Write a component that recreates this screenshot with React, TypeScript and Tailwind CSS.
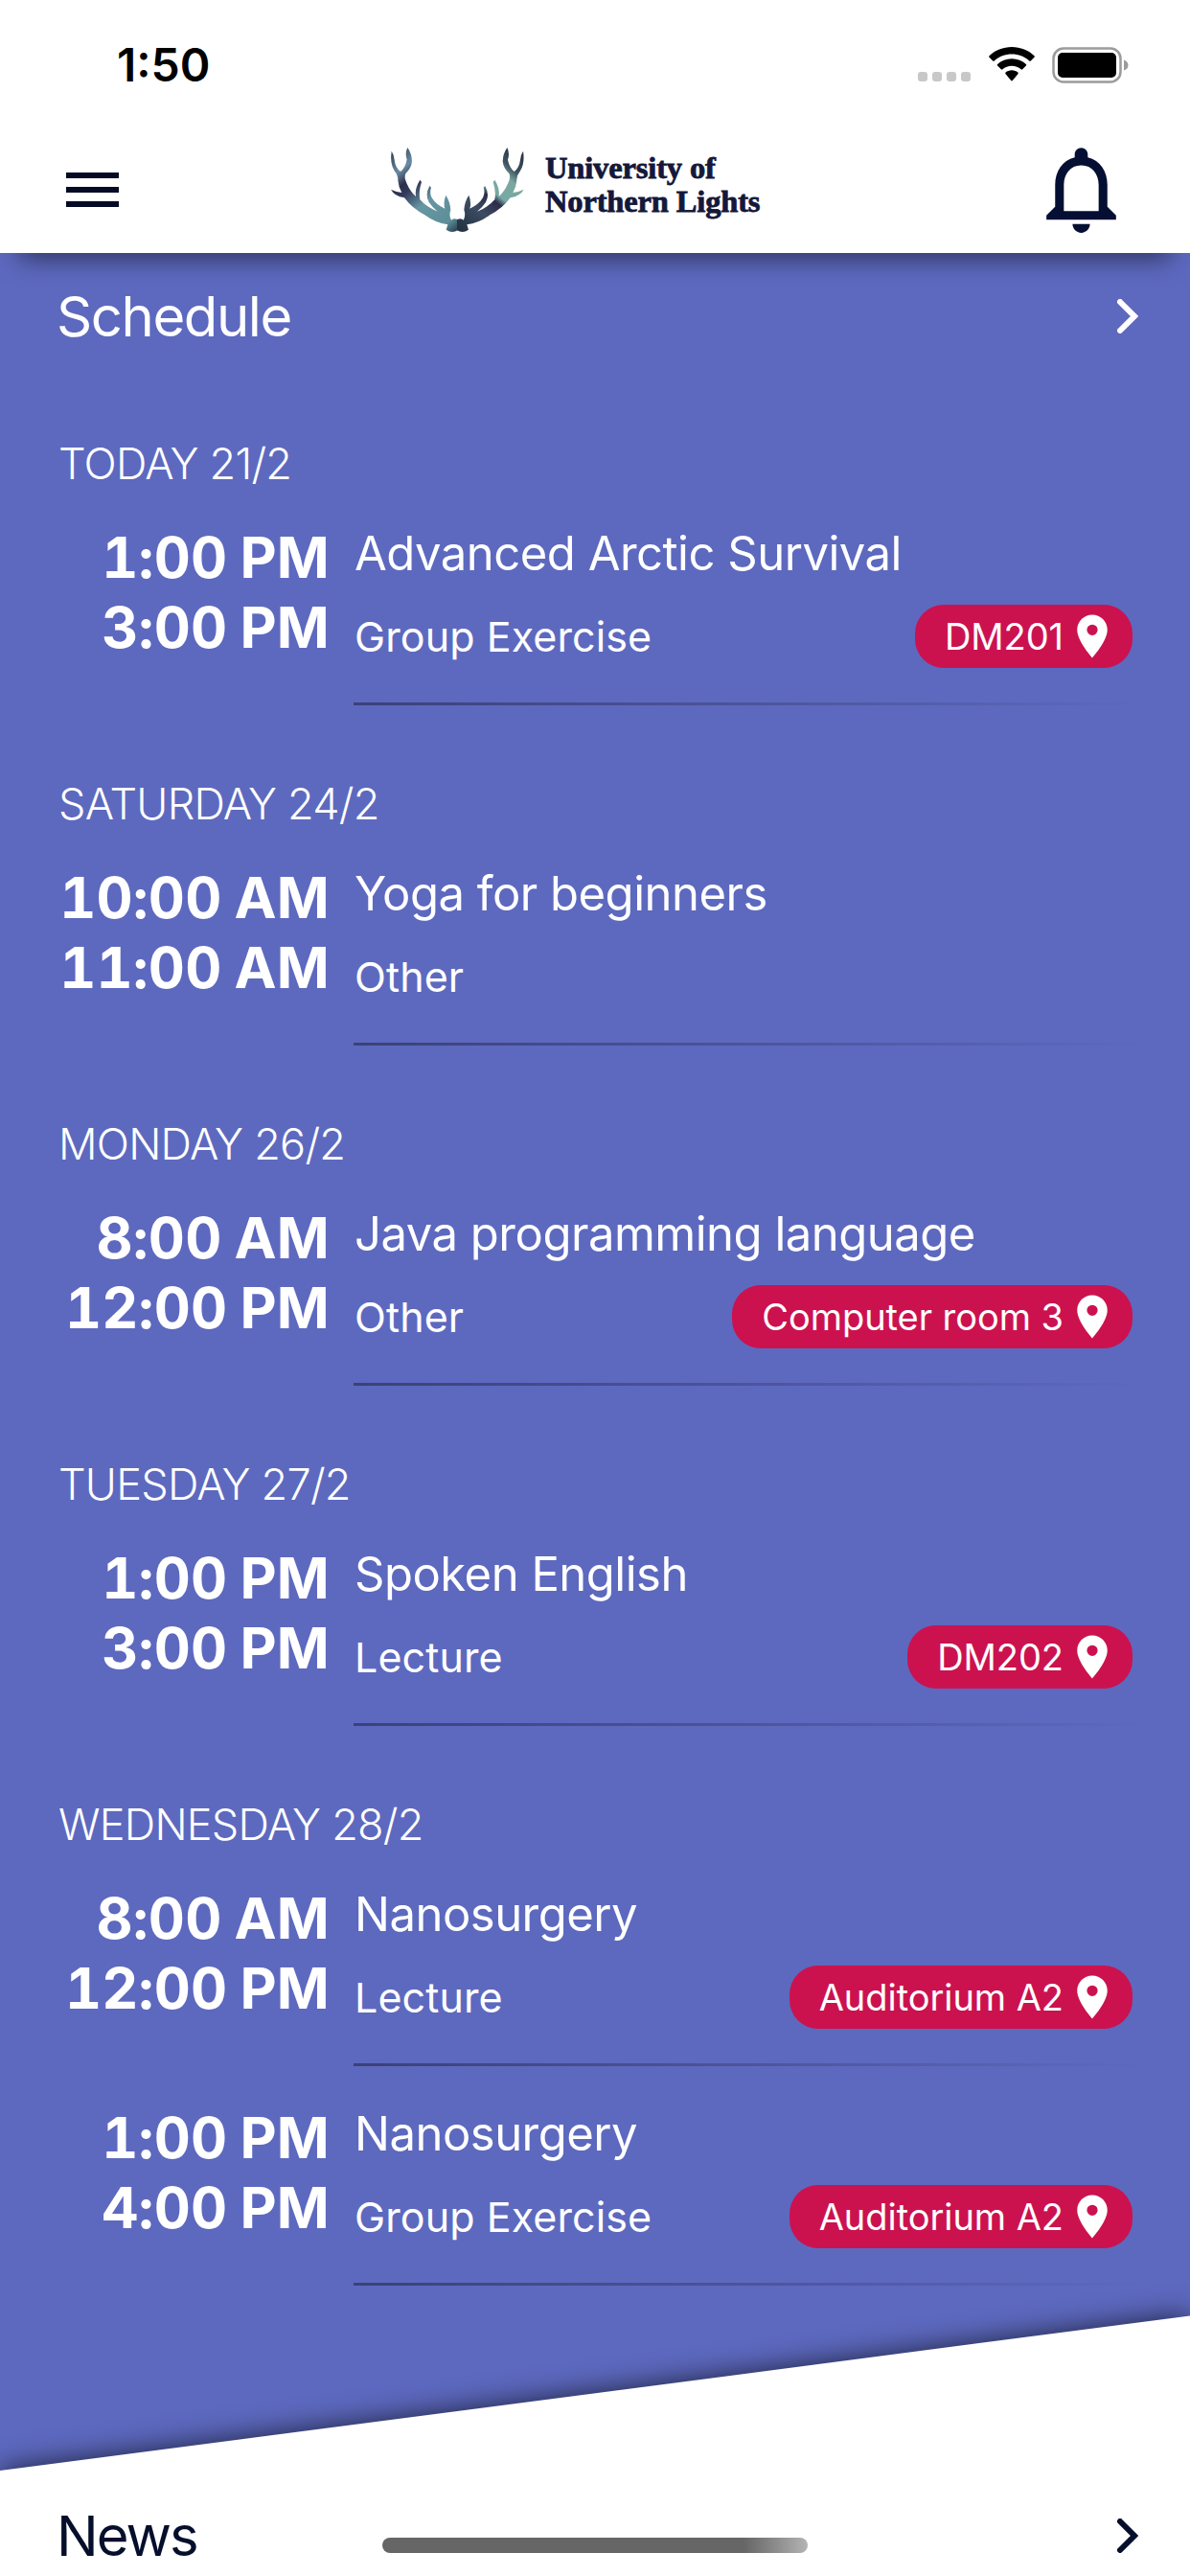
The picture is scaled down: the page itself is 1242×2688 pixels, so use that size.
type Entry = { start: string; end: string; title: string; kind: string; room?: string };
type Day = { label: string; entries: Entry[] };

const days: Day[] = [
  { label: 'TODAY 21/2', entries: [{ start: '1:00 PM', end: '3:00 PM', title: 'Advanced Arctic Survival', kind: 'Group Exercise', room: 'DM201' }] },
  { label: 'SATURDAY 24/2', entries: [{ start: '10:00 AM', end: '11:00 AM', title: 'Yoga for beginners', kind: 'Other' }] },
  { label: 'MONDAY 26/2', entries: [{ start: '8:00 AM', end: '12:00 PM', title: 'Java programming language', kind: 'Other', room: 'Computer room 3' }] },
  { label: 'TUESDAY 27/2', entries: [{ start: '1:00 PM', end: '3:00 PM', title: 'Spoken English', kind: 'Lecture', room: 'DM202' }] },
  {
    label: 'WEDNESDAY 28/2',
    entries: [
      { start: '8:00 AM', end: '12:00 PM', title: 'Nanosurgery', kind: 'Lecture', room: 'Auditorium A2' },
      { start: '1:00 PM', end: '4:00 PM', title: 'Nanosurgery', kind: 'Group Exercise', room: 'Auditorium A2' },
    ],
  },
];

function StatusBar() {
  return (
    <div className="flex h-[132px] items-start justify-between pl-[122px] pr-[64px] pt-[38px]">
      <span className="text-[48px] font-semibold leading-[60px] text-black">1:50</span>
      <div className="flex items-start pt-[11px]">
        <div className="mt-[26px] flex gap-[5px]">
          {[0, 1, 2, 3].map((i) => (
            <span key={i} className="size-[10px] rounded-[3px] bg-[#c8c8c8]" />
          ))}
        </div>
        <svg className="ml-[19px] h-[36px] w-[48px]" viewBox="0 0 48 36">
          <path d="M24 0C33 0 41.500 3.500 47.500 9.200Q48.200 10 47.500 10.800L43.800 14.500Q43 15.200 42.200 14.500C37.300 10 31 7.600 24 7.600S10.700 10 5.800 14.500Q5 15.200 4.200 14.500L.5 10.800Q-.2 10 .5 9.200C6.500 3.500 15 0 24 0Z" />
          <path d="M24 12.300C29.700 12.300 34.900 14.400 38.900 18Q39.700 18.800 38.900 19.600L35.200 23.300Q34.400 24 33.600 23.300C31 21 27.700 19.700 24 19.700S17 21 14.400 23.300Q13.600 24 12.800 23.300L9.100 19.600Q8.300 18.800 9.100 18C13.100 14.400 18.300 12.300 24 12.300Z" />
          <path d="M24 24.300C26.500 24.300 28.700 25.200 30.400 26.600Q31.200 27.400 30.400 28.200L24.800 35Q24 35.800 23.200 35L17.600 28.200Q16.800 27.400 17.600 26.600C19.300 25.200 21.500 24.300 24 24.300Z" />
        </svg>
        <svg className="ml-[18px] h-[38px] w-[80px]" viewBox="0 0 80 38">
          <rect x="1.500" y="1.500" width="70" height="35" rx="10.500" fill="none" stroke="#9b9b9b" strokeWidth="2.500" />
          <rect x="6" y="6" width="61" height="26" rx="5" />
          <path d="M75 13.500Q79.500 15 79.500 19T75 24.500Z" fill="#9b9b9b" />
        </svg>
      </div>
    </div>
  );
}

function Antlers() {
  const half =
    'M26 38Q20 75 35 100Q47 115 46 130Q48 152 58 168Q40 166 24 158Q34 178 66 184Q90 217 130 238Q165 264 202 268L197 284Q215 297 233 286L233 252Q218 246 213 254Q205 240 211 222Q209 195 196 176Q187 200 193 218Q165 206 152 184Q144 168 150 152L145 147Q130 175 143 198Q155 216 170 227Q135 213 115 190Q110 165 120 135L115 128Q98 155 102 180Q85 165 74 140Q64 120 70 108Q88 92 90 70Q89 45 76 27Q67 45 74 65Q69 90 54 102Q38 90 35 65Q33 48 26 38Z';
  return (
    <svg className="h-[105px] w-[155px]" viewBox="0 0 465 315">
      <defs>
        <linearGradient id="auroraLeft" x1="20" y1="30" x2="230" y2="290" gradientUnits="userSpaceOnUse">
          <stop offset="0" stopColor="#243247" />
          <stop offset="0.220" stopColor="#6b8ca3" />
          <stop offset="0.340" stopColor="#2c2f4a" />
          <stop offset="0.420" stopColor="#33395a" />
          <stop offset="0.600" stopColor="#6696a2" />
          <stop offset="0.880" stopColor="#5d8f98" />
          <stop offset="1" stopColor="#263f52" />
        </linearGradient>
        <linearGradient id="auroraRight" x1="20" y1="30" x2="230" y2="290" gradientUnits="userSpaceOnUse">
          <stop offset="0" stopColor="#23293c" />
          <stop offset="0.220" stopColor="#3e5260" />
          <stop offset="0.320" stopColor="#7aa79f" />
          <stop offset="0.500" stopColor="#78a9a4" />
          <stop offset="0.560" stopColor="#2b2c4a" />
          <stop offset="0.720" stopColor="#3c4c62" />
          <stop offset="1" stopColor="#22303f" />
        </linearGradient>
      </defs>
      <path d={half} fill="url(#auroraLeft)" />
      <path d={half} fill="url(#auroraRight)" transform="translate(464 0) scale(-1 1)" />
    </svg>
  );
}

function Header() {
  return (
    <header className="relative z-10 h-[264px] bg-white">
      <StatusBar />
      <div className="flex h-[132px] items-start pl-[69px]">
        <div className="mt-[48px] flex w-[55px] flex-col gap-[9px]">
          <span className="h-[6px] bg-[#050b24]" />
          <span className="h-[6px] bg-[#050b24]" />
          <span className="h-[6px] bg-[#050b24]" />
        </div>
        <div className="ml-[276px] mt-[13px] flex items-start">
          <Antlers />
          <div className="ml-[14px] mt-[13px] w-[226px] whitespace-nowrap font-['Liberation_Serif',serif] text-[32.500px] font-bold leading-[35px] tracking-[-0.150px] text-[#14183a] [-webkit-text-stroke:0.8px_#14183a]">
            <div>University of</div>
            <div>Northern Lights</div>
          </div>
        </div>
        <svg className="ml-[279px] mt-[11px] size-[109px]" viewBox="0 0 24 24" fill="#050f33">
          <path d="M12 22c1.100 0 2-.9 2-2h-4c0 1.100.9 2 2 2zm6-6v-5c0-3.070-1.630-5.640-4.500-6.320V4c0-.83-.67-1.500-1.500-1.500s-1.500.67-1.500 1.500v.68C7.640 5.360 6 7.920 6 11v5l-2 2v1h16v-1l-2-2zm-2 1H8v-6c0-2.480 1.510-4.500 4-4.500s4 2.020 4 4.500v6z" />
        </svg>
      </div>
    </header>
  );
}

function Chevron() {
  return (
    <svg className="h-[36px] w-[22px]" viewBox="0 0 22 36" fill="none" stroke="currentColor" strokeWidth="6">
      <path d="M3 3L18 18L3 33" strokeLinecap="round" />
    </svg>
  );
}

function RoomPill({ room }: { room: string }) {
  return (
    <div className="flex h-[66px] items-center rounded-[30px] bg-[#cb124f] pl-[31px] pr-[15px]">
      <span className="whitespace-nowrap text-[38px] leading-[66px] tracking-[-0.050px]">{room}</span>
      <svg className="ml-[3px] size-[54px]" viewBox="0 0 24 24" fill="#fff">
        <path d="M12 2C8.130 2 5 5.130 5 9c0 5.250 7 13 7 13s7-7.750 7-13c0-3.870-3.130-7-7-7zm0 9.500a2.500 2.500 0 0 1 0-5 2.500 2.500 0 0 1 0 5z" />
      </svg>
    </div>
  );
}

function EntryRow({ entry }: { entry: Entry }) {
  return (
    <div className="flex h-[229px]">
      <div className="w-[344px] shrink-0 pt-[38px] text-right text-[59px] font-bold leading-[73px] tabular-nums tracking-[0.200px] [word-spacing:-3px]">
        <div>{entry.start}</div>
        <div>{entry.end}</div>
      </div>
      <div className="ml-[25px] flex w-[831px] flex-col">
        <div className="mt-[36px] h-[70px] whitespace-nowrap pl-px text-[49px] leading-[70px] tracking-[-0.500px]">{entry.title}</div>
        <div className="mt-[17px] flex h-[68px] items-center justify-between pr-[18px]">
          <span className="pl-px text-[43px] tracking-[0.100px]">{entry.kind}</span>
          {entry.room && <RoomPill room={entry.room} />}
        </div>
        <div className="mt-auto h-[3px] bg-linear-to-r from-[#3b4178] to-transparent" />
      </div>
    </div>
  );
}

export default function App() {
  return (
    <div className="relative flex h-[2688px] w-[1242px] flex-col overflow-hidden bg-white font-['Inter',sans-serif]">
      <Header />
      <main className="relative h-[2314px] shrink-0 bg-[#5d69bf] text-white">
        <div className="absolute inset-x-[24px] top-[-24px] h-[24px] shadow-[0_2px_26px_4px_rgba(0,0,0,0.5)]" />
        <div className="flex h-[117px] items-center justify-between pl-[59px] pr-[54px] pt-[15px]">
          <h1 className="text-[58px] leading-[72px] tracking-[-1.400px]">Schedule</h1>
          <Chevron />
        </div>
        {days.map((day) => (
          <section key={day.label}>
            <h2 className="h-[126px] pl-[61px] pt-[76px] text-[45px] font-[330] leading-[54px] tracking-[-0.750px]">{day.label}</h2>
            {day.entries.map((e) => (
              <EntryRow key={e.start} entry={e} />
            ))}
          </section>
        ))}
        <div className="absolute left-0 top-[2314px] h-[320px] w-[1242px] origin-top-left -skew-y-[7.410deg] bg-white shadow-[0_0_30px_rgba(0,0,0,0.7)]" />
      </main>
      <div className="relative flex grow items-center justify-between pl-[59px] pr-[54px] pt-[26px] text-[#050f2c]">
        <h1 className="text-[58px] leading-[72px] tracking-[-2px]">News</h1>
        <Chevron />
      </div>
      <div className="absolute left-[399px] top-[2648px] h-[16px] w-[444px] rounded-full bg-linear-to-r from-[#666] from-85% to-[#b4b4b4]" />
    </div>
  );
}
